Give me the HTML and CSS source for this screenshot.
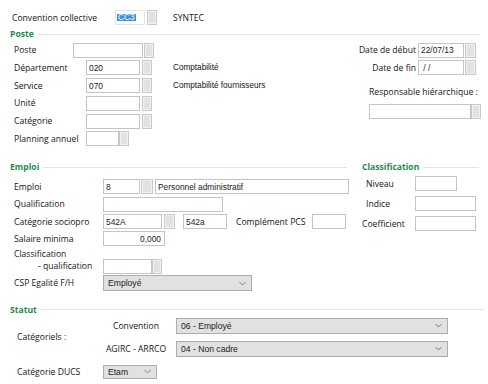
FILE: index.html
```html
<!DOCTYPE html>
<html lang="fr">
<head>
<meta charset="utf-8">
<link rel="stylesheet" href="styles.css">
</head>
<body>
<div class="page">
  <div class="cc-row">
    <span class="lbl cc-lbl">Convention collective</span>
    <span class="field cc-field"><span class="sel-text">CC3</span></span><span class="btn"></span>
    <span class="txt syntec">SYNTEC</span>
  </div>

  <section class="poste">
    <h2 class="head head-poste">Poste</h2>
    <div class="poste-body">
      <div class="col-left">
        <div class="row"><span class="lbl w59">Poste</span><span class="field w70"></span><span class="btn ml1"></span></div>
        <div class="row"><span class="lbl w72">Département</span><span class="field w54"><span class="v">020</span></span><span class="btn ml2"></span><span class="desc">Comptabilité</span></div>
        <div class="row"><span class="lbl w72">Service</span><span class="field w54"><span class="v">070</span></span><span class="btn ml2"></span><span class="desc">Comptabilité fournisseurs</span></div>
        <div class="row"><span class="lbl w72">Unité</span><span class="field w54"></span><span class="btn ml2"></span></div>
        <div class="row"><span class="lbl w72">Catégorie</span><span class="field w54"></span><span class="btn ml2"></span></div>
        <div class="row"><span class="lbl w72">Planning annuel</span><span class="field w33"></span><span class="btn"></span></div>
      </div>
      <div class="col-right">
        <div class="row date-row"><span class="lbl">Date de début</span><span class="field w46"><span class="v">22/07/13</span></span><span class="btn ml1 w11"></span></div>
        <div class="row date-row"><span class="lbl">Date de fin</span><span class="field w46"><span class="v">&nbsp;/ /</span></span><span class="btn ml1 w11"></span></div>
        <div class="resp">
          <span class="lbl resp-lbl">Responsable hiérarchique :</span>
          <div class="resp-field"><span class="field w102"></span><span class="btn"></span></div>
        </div>
      </div>
    </div>
  </section>

  <section class="emploi">
    <div class="emploi-heads">
      <h2 class="head head-emploi">Emploi</h2>
      <h2 class="head head-classif">Classification</h2>
    </div>
    <div class="emploi-body">
      <div class="emploi-left">
        <div class="row"><span class="lbl w89">Emploi</span><span class="field w37"><span class="v">8</span></span><span class="btn ml1 w12"></span><span class="field w194 ml2"><span class="v">Personnel administratif</span></span></div>
        <div class="row"><span class="lbl w89">Qualification</span><span class="field w120"></span></div>
        <div class="row"><span class="lbl w89">Catégorie sociopro</span><span class="field w59"><span class="v">542A</span></span><span class="btn ml2 w11"></span><span class="field w44 ml8"><span class="v">542a</span></span><span class="lbl pcs-lbl">Complément PCS</span><span class="field w34"></span></div>
        <div class="row"><span class="lbl w89">Salaire minima</span><span class="field w62 right"><span class="v">0,000</span></span></div>
        <div class="row row-classif"><span class="lbl w89 two-line">Classification<br><span class="indent">- qualification</span></span><span class="field w49"></span><span class="btn"></span></div>
        <div class="row"><span class="lbl w89">CSP Egalité F/H</span><span class="select w149"><span class="v">Employé</span><svg class="chev" width="7" height="5" viewBox="0 0 7 5"><path d="M0.5 1 L3.5 4 L6.5 1" fill="none" stroke="#7a7a7a" stroke-width="1"/></svg></span></div>
      </div>
      <div class="emploi-right">
        <div class="row crow"><span class="lbl w49">Niveau</span><span class="field w42"></span></div>
        <div class="row crow"><span class="lbl w49">Indice</span><span class="field w61"></span></div>
        <div class="row crow"><span class="lbl w49 coef">Coefficient</span><span class="field w61"></span></div>
      </div>
    </div>
  </section>

  <section class="statut">
    <h2 class="head head-statut">Statut</h2>
    <div class="statut-grid">
      <span class="lbl cat-lbl">Catégoriels :</span>
      <span class="lbl sub-lbl">Convention</span>
      <span class="select w272"><span class="v">06 - Employé</span><svg class="chev" width="7" height="5" viewBox="0 0 7 5"><path d="M0.5 1 L3.5 4 L6.5 1" fill="none" stroke="#7a7a7a" stroke-width="1"/></svg></span>
      <span class="lbl sub-lbl">AGIRC - ARRCO</span>
      <span class="select w272"><span class="v">04 - Non cadre</span><svg class="chev" width="7" height="5" viewBox="0 0 7 5"><path d="M0.5 1 L3.5 4 L6.5 1" fill="none" stroke="#7a7a7a" stroke-width="1"/></svg></span>
    </div>
    <div class="row ducs-row"><span class="lbl w86">Catégorie DUCS</span><span class="select w54 small"><span class="v">Etam</span><svg class="chev" width="7" height="5" viewBox="0 0 7 5"><path d="M0.5 1 L3.5 4 L6.5 1" fill="none" stroke="#7a7a7a" stroke-width="1"/></svg></span></div>
  </section>
</div>
</body>
</html>
```

FILE: styles.css
```css
* { box-sizing: border-box; margin: 0; padding: 0; }
html, body { background: #fff; }
body {
  width: 488px;
  height: 384px;
  overflow: hidden;
  font-family: "Open Sans", "Noto Sans", sans-serif;
  font-size: 8.6px;
  color: #141414;
}
.page { padding-top: 10px; }

.lbl { display: inline-block; white-space: nowrap; flex: none; }
.txt { white-space: nowrap; }

.field {
  display: inline-flex;
  align-items: center;
  height: 15px;
  border: 1px solid #c4c4c4;
  background: #fff;
  flex: none;
  font-family: "Liberation Sans", Arial, sans-serif;
  font-size: 8.4px;
  color: #1a1a1a;
  overflow: hidden;
  white-space: nowrap;
}
.field .v { padding-left: 2px; }
.field.right { justify-content: flex-end; }
.field.right .v { padding-right: 3px; }

.btn {
  display: inline-block;
  flex: none;
  width: 10px;
  height: 15px;
  background: #e2e2e2;
  border: 1px solid #c9c9c9;
  box-shadow: inset 0 0 0 1px #f1f1f1;
}

.select {
  display: inline-flex;
  align-items: center;
  justify-content: space-between;
  height: 16px;
  background: #e1e1e1;
  border: 1px solid #adadad;
  flex: none;
  font-family: "Liberation Sans", Arial, sans-serif;
  font-size: 8.6px;
  color: #1a1a1a;
  padding: 0 5px 0 4px;
  white-space: nowrap;
}
.select.small { height: 14px; }
.chev { display: block; flex: none; }

.row { display: flex; align-items: center; height: 15px; }

/* widths */
.w11 { width: 11px; } .w12 { width: 12px; }
.w33 { width: 33px; } .w34 { width: 34px; } .w37 { width: 37px; }
.w42 { width: 42px; } .w44 { width: 44px; } .w46 { width: 46px; }
.w49 { width: 49px; } .w54 { width: 54px; } .w59 { width: 59px; }
.w61 { width: 61px; } .w62 { width: 62px; } .w70 { width: 70px; }
.w72 { width: 72px; } .w86 { width: 86px; } .w89 { width: 89px; }
.w102 { width: 102px; } .w120 { width: 120px; } .w149 { width: 149px; }
.w194 { width: 194px; } .w272 { width: 272px; }
.ml1 { margin-left: 1px; } .ml2 { margin-left: 2px; } .ml8 { margin-left: 8px; }

/* top */
.cc-row { display: flex; align-items: center; height: 15px; padding-left: 12px; }
.cc-lbl { width: 103px; }
.cc-field { width: 30px; border-color: #e4e4e4; }
.sel-text {
  margin-left: 1px;
  background: #3d8fe0;
  color: #fff;
  font-size: 8.4px;
  line-height: 7px;
  padding: 0 1px;
}
.cc-field + .btn { margin-left: 2px; }
.syntec { margin-left: 16px; }

/* section heads */
.head {
  display: flex;
  align-items: center;
  font-size: 8.6px;
  font-weight: 700;
  color: #1f8a50;
  height: 10px;
  padding-left: 10px;
}
.head::after {
  content: "";
  flex: 1;
  height: 0;
  border-top: 1.5px solid #e3e3e3;
  margin-left: 4px;
}

.poste { margin-top: 4px; }
.head-poste { margin-right: 8px; }
.poste-body {
  display: grid;
  grid-template-columns: 1fr 124px;
  margin-top: 3.5px;
}
.col-left { padding-left: 14px; display: flex; flex-direction: column; gap: 2.8px; }
.desc { margin-left: 21px; font-family: "Liberation Sans", Arial, sans-serif; font-size: 8.2px; white-space: nowrap; }

.col-right { display: flex; flex-direction: column; gap: 2.8px; padding: 0 12px 0 5px; }
.date-row { justify-content: flex-end; }
.date-row .lbl { margin-right: 2px; }
.resp { margin-top: 9px; margin-right: -5px; }
.resp-lbl { display: block; height: 11px; line-height: 11px; }
.resp-field { display: flex; margin-top: 6px; }

/* emploi */
.emploi { margin-top: 16px; }
.emploi-heads { display: grid; grid-template-columns: 352px 1fr; }
.head-emploi { margin-right: 5px; }
.head-classif { margin-right: 9px; }
.emploi-body { display: grid; grid-template-columns: 352px 1fr; margin-top: 7px; }
.emploi-left { padding-left: 14px; display: flex; flex-direction: column; gap: 2.3px; }
.pcs-lbl { margin-left: 9px; width: 76px; }
.row-classif { height: 25px; align-items: flex-end; }
.two-line { line-height: 12px; align-self: flex-start; margin-top: -1px; }
.indent { padding-left: 24px; }
.emploi-right { padding-left: 14px; display: flex; flex-direction: column; gap: 5px; margin-top: -3px; }
.coef { margin-left: -4px; width: 53px; }

/* statut */
.statut { margin-top: 14px; }
.head-statut { margin-right: 4px; }
.statut-grid {
  display: grid;
  grid-template-columns: 86px 73px 272px;
  grid-template-rows: 16px 16px;
  row-gap: 7px;
  align-items: center;
  margin-top: 3px;
  padding-left: 17px;
}
.cat-lbl { grid-row: 1 / span 2; grid-column: 1; }
.sub-lbl { text-align: center; width: 66px; }
.ducs-row { padding-left: 17px; margin-top: 8px; height: 14px; }
```
